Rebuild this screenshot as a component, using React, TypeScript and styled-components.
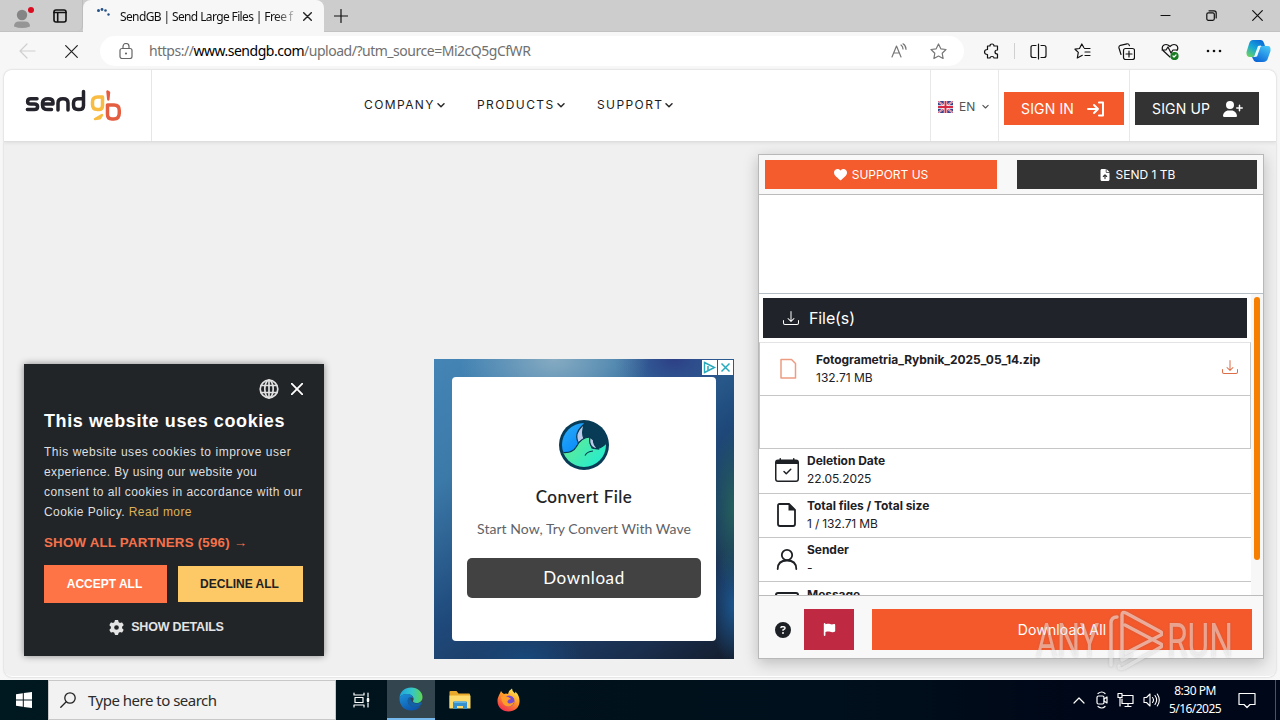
import React from 'react';
import styled, { createGlobalStyle } from 'styled-components';
import { FaCircleQuestion, FaFileArrowUp, FaFlag, FaHeart, FaUserPlus, FaGear } from 'react-icons/fa6';
import { BsCalendarCheck, BsDownload } from 'react-icons/bs';

const ui = '"Noto Sans", "Open Sans", sans-serif';
const inter = 'Inter, "Liberation Sans", sans-serif';

const Global = createGlobalStyle`
  * { box-sizing: border-box; }
  body { margin: 0; overflow: hidden; }
  svg { display: block; flex: none; }
  button { border: 0; padding: 0; margin: 0; font: inherit; }
`;

const Screen = styled.div`
  width: 1280px; height: 720px; overflow: hidden; position: relative;
  display: flex; flex-direction: column; background: #f7f7f7; font-family: ${ui};
`;
const Label = styled.span<{ $ls?: number }>`
  letter-spacing: ${p => p.$ls ?? 0}px; white-space: nowrap;
`;

/* Browser chrome */
const TabStrip = styled.div`
  height: 32px; flex: none; display: flex; background: #cdcdcd; border-bottom: 1px solid #c2c2c2;
`;
const StripLeft = styled.div`
  width: 83px; display: flex; align-items: center; padding: 1px 0 0 12px; gap: 19px;
  border-right: 1px solid #bdbdbd; border-radius: 0 0 5px 0;
`;
const Tab = styled.div`
  width: 241px; height: 32px; background: #f7f7f7; border-radius: 8px 8px 0 0;
  display: flex; align-items: center; padding: 0 11px 0 13px; font-size: 12px; color: #111;
`;
const TabTitle = styled.div`
  width: 176px; margin-left: 10px; margin-right: 7px; overflow: hidden; white-space: nowrap;
  mask-image: linear-gradient(90deg, #000 155px, transparent 180px);
`;
const NewTab = styled.div`flex: 1; padding: 9px 0 0 10px;`;
const WindowButtons = styled.div`
  display: flex; align-items: center; gap: 35px; padding-right: 17px;
`;
const Toolbar = styled.div`
  height: 38px; flex: none; display: flex; align-items: center; padding-left: 19px; background: #f7f7f7;
`;
const NavButtons = styled.div`display: flex; align-items: center; flex: none; width: 81px; gap: 28px;`;
const Address = styled.div`
  width: 864px; flex: none; height: 30px; background: #fff; border-radius: 15px; display: flex; align-items: center;
  padding: 0 17px 0 18px; font-size: 14px; color: #707070;
  b { font-weight: 400; color: #000; }
`;
const AddressText = styled.div`margin-left: 15px; flex: 1; white-space: nowrap; padding-bottom: 1px;`;
const ReadAloud = styled.div`margin-right: 23px;`;
const Tools = styled.div`display: flex; align-items: center; padding-left: 5px; flex: none;`;
const Tool = styled.div`width: 44px; flex: none; display: flex; justify-content: center;`;
const Rule = styled.i`width: 1px; height: 16px; background: #d0d0d0; margin: 0 1px;`;

/* Page */
const Page = styled.div`
  width: 1272px; height: 607px; margin-left: 4px; flex: none; background: #f0f0f0; overflow: hidden;
  border-radius: 8px; box-shadow: 0 0 2px #bbb; border-bottom: 1px solid #fff; display: flex; flex-direction: column;
`;
const SiteHeader = styled.header`
  height: 72px; flex: none; background: #fff; border-bottom: 1px solid #dedede; box-shadow: 0 1px 3px #ddd;
  display: flex; font-family: ${inter};
`;
const LogoCell = styled.div`width: 148px; border-right: 1px solid #e6e6e6; padding: 17px 0 0 21px;`;
const SiteNav = styled.nav`
  display: flex; padding: 0 0 2px 212px; flex: 1; align-items: center; font-size: 12px; font-weight: 400; color: #1c1c1c;
`;
const NavItem = styled.div<{ $w: number }>`width: ${p => p.$w}px; display: flex; align-items: center; gap: 2px;`;
const HeaderCell = styled.div<{ $w: number; $pad: string }>`
  width: ${p => p.$w}px; border-left: 1px solid #e8e8e8; padding: ${p => p.$pad}; display: flex; align-items: center;
  color: #555; font-size: 12px;
`;
const Language = styled.span`margin: 0 7px 0 6px; display: flex; color: #555;`;
const AuthButton = styled.button<{ $w: number; $dark?: boolean }>`
  width: ${p => p.$w}px; height: 33px; background: ${p => (p.$dark ? '#333' : '#f4592c')}; color: #fff;
  font-size: 14px; font-weight: 400; display: flex; align-items: center; gap: 13px; padding-left: 17px;
`;

const Content = styled.main`flex: 1; display: flex; align-items: flex-end; padding: 0 12px 17px 20px;`;

/* Cookie notice */
const Cookie = styled.section`
  width: 300px; height: 292px; margin: 0 110px 3px 0; background: #222528; padding: 15px 20px; color: #eee;
  box-shadow: 0 0 7px rgba(0,0,0,.45); font-family: "Liberation Sans", sans-serif; display: flex; flex-direction: column;
`;
const CookieTop = styled.div`display: flex; justify-content: flex-end; gap: 12px; align-items: center; height: 20px; padding-right: 1px;`;
const CookieTitle = styled.h2`margin: 11px 0 0; font-size: 18px; line-height: 22px; color: #fff; white-space: nowrap;`;
const CookieText = styled.p`
  margin: 10px 0 0; font-size: 12px; line-height: 20px; color: #dfdfdf;
  em { font-style: normal; color: #dcb157; }
`;
const Line = styled.span<{ $ls: number }>`display: block; white-space: nowrap; letter-spacing: ${p => p.$ls}px;`;
const Partners = styled.div`margin-top: 11px; font-size: 13.3px; line-height: 20px; font-weight: 700; color: #f4724b; white-space: nowrap;`;
const CookieButtons = styled.div`display: flex; align-items: center; gap: 11px; margin-top: 12px; height: 38px;`;
const CookieButton = styled.button<{ $accept?: boolean }>`
  width: ${p => (p.$accept ? 123 : 125)}px; height: ${p => (p.$accept ? 38 : 36)}px;
  background: ${p => (p.$accept ? '#ff7447' : '#fcc966')}; color: ${p => (p.$accept ? '#fff' : '#222')};
  font-size: 12px; font-weight: 700; padding-right: 2px;
`;
const Details = styled.div`
  display: flex; justify-content: center; align-items: center; gap: 7px; margin-top: 15px; height: 18px;
  font-size: 12.5px; font-weight: 700; color: #e4e4e4; padding-right: 15px;
`;

/* Advertisement */
const Ad = styled.section`
  width: 300px; height: 300px; margin-right: 24px; position: relative; padding: 18px;
  background:
    radial-gradient(ellipse 95px 60px at 40% 0, #86abc2, transparent),
    radial-gradient(ellipse 60px 40px at 80% 0, #2d3f86, transparent),
    radial-gradient(ellipse 25px 80px at 100% 50%, #24605c, transparent),
    radial-gradient(ellipse 25px 60px at 100% 82%, #1b568e, transparent),
    radial-gradient(ellipse 60px 30px at 30% 100%, #17477a, transparent),
    linear-gradient(145deg, #4485b6 0, #3b79a8 25%, #1f4a7c 52%, #1a2e4e 85%, #141d2c);
`;
const AdCard = styled.div`
  width: 264px; height: 264px; background: #fff; border-radius: 4px; display: flex; flex-direction: column; align-items: center;
  padding-top: 43px; font-family: Lato, sans-serif; color: #202124;
`;
const AdTitle = styled.div`margin-top: 15px; font-size: 17px; line-height: 24px; font-weight: 500; -webkit-text-stroke: .1px #202124;`;
const AdText = styled.div`margin-top: 10px; font-size: 14px; line-height: 20px; color: #5f6368;`;
const AdButton = styled.button`
  width: 234px; height: 40px; margin-top: 19px; padding-bottom: 2px; border-radius: 5px; background: #424242; color: #fff; font-size: 17px;
`;
const AdChoices = styled.div`position: absolute; top: 1px; right: 1px; display: flex; gap: 1px;`;

/* Download panel */
const Panel = styled.section`
  width: 506px; height: 505px; background: #fff; border: 1px solid #b8b8b8; font-family: ${inter}; color: #1d2024;
  box-shadow: 0 4px 14px rgba(0,0,0,.22); display: flex; flex-direction: column;
`;
const PanelTop = styled.div`
  height: 40px; flex: none; background: #f8f8f8; border-bottom: 1px solid #bbb; display: flex; padding: 5px 6px; gap: 20px;
`;
const TopButton = styled.button<{ $w: number; $dark?: boolean }>`
  width: ${p => p.$w}px; height: 29px; background: ${p => (p.$dark ? '#333' : '#f45b2d')}; color: #fff; font-size: 12px;
  display: flex; align-items: center; justify-content: center; gap: 5px;
`;
const Blank = styled.div`height: 99px; flex: none; border-bottom: 1px solid #b5bec4;`;
const Scroller = styled.div`height: 302px; flex: none; display: flex; border-bottom: 1px solid #bbb; overflow: hidden;`;
const List = styled.div`width: 492px; flex: none;`;
const Track = styled.div`width: 12px; background: #f7f7f7; padding: 3px 0 0 3px;`;
const Thumb = styled.div`width: 6px; height: 263px; border-radius: 3px; background: #f77f00;`;
const FilesTitle = styled.div`
  margin: 4px 4px 4px; height: 40px; background: #202329; color: #fff; font-size: 16px; display: flex; align-items: center;
  padding-left: 20px; gap: 10px;
`;
const FileRow = styled.div`
  height: 53px; border: solid #c6c6c6; border-width: 0 1px 1px; display: flex; align-items: center; padding: 0 12px 0 19px;
  &:nth-child(2) { height: 54px; border-top: 1px solid #e3e3e3; }
`;
const RowAction = styled.div`padding-bottom: 4px;`;
const Two = styled.div<{ $gap?: number }>`
  margin-left: ${p => p.$gap ?? 0}px; font-size: 12px; line-height: 18px; display: flex; flex-direction: column; flex: 1;
  b { font-weight: 700; letter-spacing: -.04px; }
`;
const InfoRow = styled.div<{ $h: number }>`
  height: ${p => p.$h}px; border-bottom: 1px solid #c6c6c6; padding: 3px 0 0 16px; display: flex; gap: 8px;
  > svg { margin-top: 6px; }
  &:last-child { padding-top: 4px; }
`;
const PanelFooter = styled.div`
  flex: 1; background: #f8f8f8; display: flex; align-items: center; padding: 4px 11px 0 16px;
  > svg { margin-top: 2px; }
`;
const FlagButton = styled.button`
  width: 50px; height: 41px; margin: 0 18px 0 13px; background: #c02942; color: #fff; display: flex; align-items: center; justify-content: center;
`;
const DownloadAll = styled.button`flex: 1; height: 41px; background: #f4592c; color: #fff; font-size: 14px;`;

const Watermark = styled.div`
  position: absolute; left: 1036px; top: 608px; width: 200px; height: 66px; display: flex; align-items: center; gap: 4px;
  color: rgba(255,255,255,.45); filter: drop-shadow(0 0 1px rgba(90,90,90,.5));
`;
const MarkWord = styled.div<{ $w: number; $scale: number }>`
  width: ${p => p.$w}px; font: 400 49px/66px Roboto, sans-serif; transform: scaleX(${p => p.$scale}); transform-origin: 0 50%; white-space: nowrap;
`;

/* Taskbar */
const Taskbar = styled.footer`
  height: 40px; margin-top: 3px; flex: none; background: linear-gradient(90deg, #001820, #00121c 40%, #00101c 65%, #000718 85%);
  display: flex; color: #fff;
`;
const TaskCell = styled.div<{ $w: number; $active?: boolean }>`
  width: ${p => p.$w}px; height: 40px; display: flex; align-items: center; justify-content: center;
  background: ${p => (p.$active ? '#33464f' : 'transparent')};
  border-bottom: ${p => (p.$active ? '2px solid #76b9ed' : '0')};
`;
const Search = styled.div`
  width: 288px; height: 40px; background: #f2f2f2; border: 1px solid #c8c8c8; color: #2b2b2b; font-size: 15px;
  display: flex; align-items: center; gap: 12px; padding-left: 11px;
`;
const Tray = styled.div`margin-left: auto; display: flex; align-items: center; gap: 9px;`;
const Clock = styled.div`
  width: 54px; margin-right: 7px; margin-left: -1px; font-size: 12px; line-height: 18px; display: flex; flex-direction: column; align-items: center;
`;
const ShowDesktop = styled.i`width: 5px; height: 40px; border-left: 1px solid #4b5360; margin-left: 10px;`;

type StrokeProps = { w?: number; h?: number; box?: string; color?: string; sw?: number; children: React.ReactNode };
const Stroke = ({ w = 20, h = w, box = `0 0 ${w} ${h}`, color = '#222', sw = 1.2, children }: StrokeProps) => (
  <svg width={w} height={h} viewBox={box} fill="none" stroke={color} strokeWidth={sw} strokeLinecap="round" strokeLinejoin="round">{children}</svg>
);
const Cross = ({ s = 10, c = '#222', sw = 1.2 }) => <Stroke w={s} color={c} sw={sw}><path d={`M.7.7 ${s - 0.7} ${s - 0.7}M${s - 0.7}.7.7 ${s - 0.7}`} /></Stroke>;
const Chevron = ({ s = 8, c = '#2b2b2b', sw = 1.5 }) => <Stroke w={s} box="0 0 8 8" color={c} sw={sw}><path d="m1 2.7 3 3 3-3" /></Stroke>;

const SendGbLogo = () => (
  <svg width="100" height="38" viewBox="0 0 100 38" fill="none" strokeWidth="3.5" strokeLinecap="round" strokeLinejoin="round">
    <g stroke="#25232b">
      <path d="M12 11.8H5.800q-3.200 0-3.200 2.600t3.200 2.600h3.500q3.300 0 3.300 2.800T9.300 22.600H2.400" />
      <path d="M17.500 17H28v-1.500q0-3.700-5-3.700t-5.500 4v2.500q0 4.300 5.500 4.300h3.500" />
      <path d="M33 23v-7q0-4.200 5-4.200t5 4.200v7" />
      <path d="M58.500 4.500v14q0 4.100-4.500 4.100h-1q-4.500 0-4.500-4.500v-2q0-4.300 4.500-4.300h5" />
    </g>
    <path d="M77.500 10H72.500q-5 0-5 5v2.500q0 5 5 5h1.500q3.500 0 3.500-4Z" stroke="#f8bc42" />
    <path d="m70 32 7-4-2 3.200Z" fill="#f8bc42" stroke="#f8bc42" strokeWidth="2.500" />
    <path d="m82.500 4.500 1.500 1-.7 7Z" fill="#e75a3d" stroke="#e75a3d" strokeWidth="2.500" />
    <path d="M82.500 18h6.500q5.300 0 5.300 5.500v2.200q0 6.300-5.500 6.300h-1.800q-4.500 0-4.500-4.500Z" stroke="#e45e42" />
  </svg>
);
const UkFlag = () => (
  <svg width="15" height="12" viewBox="0 0 15 12">
    <rect width="15" height="12" rx="1" fill="#36448d" />
    <path d="m0 0 15 12M15 0 0 12" stroke="#f2dce6" strokeWidth="1.800" /><path d="m0 0 15 12M15 0 0 12" stroke="#d83b50" strokeWidth=".8" />
    <path d="M7.500 0v12M0 6h15" stroke="#fff" strokeWidth="3.400" /><path d="M7.500 0v12M0 6h15" stroke="#d52842" strokeWidth="2" />
  </svg>
);
const WaveLogo = () => (
  <svg width="50" height="50" viewBox="0 0 50 50">
    <defs>
      <linearGradient id="blue" x2=".7" y2="1"><stop stopColor="#31b3f6" /><stop offset="1" stopColor="#0789fb" /></linearGradient>
      <linearGradient id="green" x2="1" y2=".6"><stop stopColor="#71e98a" /><stop offset="1" stopColor="#22edd0" /></linearGradient>
      <clipPath id="disc"><circle cx="25" cy="25" r="22" /></clipPath>
    </defs>
    <circle cx="25" cy="25" r="25" fill="#073b56" />
    <g clipPath="url(#disc)" stroke="#063950" strokeWidth="1.200">
      <path d="M0 34V0h24l1.500 4Q16 12 20 22q-3 9-10 11Z" fill="url(#blue)" />
      <path d="M25.500 4Q14 13 19.500 23l5.500-4.500q-3-6 .5-14.500Z" fill="#bccbea" />
      <path d="M0 32q13 2.500 17.500-5.500Q22 17.500 31 17q-.5 6 2 11 8 3 16-7v29H0Z" fill="url(#green)" />
      <path d="M31 17q-2 11 8 12-5-5-4.500-9Z" fill="#bccbea" />
      <path d="M26 35.500q2-4 8-4.500" fill="none" />
    </g>
  </svg>
);
const EdgeLogo = () => (
  <svg width="24" height="24" viewBox="0 0 24 24">
    <defs>
      <linearGradient id="edgeTop" x1="0" x2="1"><stop stopColor="#1da5df" /><stop offset=".55" stopColor="#35c6c9" /><stop offset="1" stopColor="#5fd64e" /></linearGradient>
      <linearGradient id="edgeLow" x1="0" y1="0" x2=".6" y2="1"><stop stopColor="#1c92d8" /><stop offset="1" stopColor="#0d55ad" /></linearGradient>
    </defs>
    <path d="M.5 11C1 4.500 6 .5 12 .5c7 0 11.500 5 11.500 9.500 0 4-3 6-6 6-2.500 0-4-1-3.400-2.200C16 11 13 7 8.500 7 4.500 7 1.500 8.500.5 11Z" fill="url(#edgeTop)" />
    <path d="M.5 11C1.500 8.500 4.500 7 8.500 7c3 0 5.300 1.800 5.700 4-4-1.500-6 1-5.200 4.500.8 3.800 5.500 6 12.500 3.500-2 3-5.500 4.500-9.500 4.500C5 23.500.2 18 .5 11Z" fill="url(#edgeLow)" />
    <path d="M9 15.500C8 12 9.500 10 12 10.200c-.8 1-.8 2 .4 3.600 2 3.200 6.400 3.500 9.400 1.200 1 0 1.200 1 .6 2-1 1.700-3.200 3-6.400 3-3.500 0-6-1.700-7-4.500Z" fill="#1260a8" />
  </svg>
);
const FolderLogo = () => (
  <svg width="22" height="20" viewBox="0 0 22 20">
    <path d="M.5 2q0-1 1-1h6l2 2.500H20q1 0 1 1V18H.5Z" fill="#e9a92b" />
    <path d="M.5 5.500H21.500V18.500H.5Z" fill="#fddb6d" />
    <path d="M4 19v-6.500q0-1 1-1h12q1 0 1 1V19h-4v-3H8v3Z" fill="#3791cd" /><path d="M5 11.500h12V13H5Z" fill="#62b5e4" />
  </svg>
);
const FirefoxLogo = () => (
  <svg width="23" height="24" viewBox="0 0 23 24">
    <defs>
      <linearGradient id="flame" x1=".8" y1="0" x2=".25" y2="1"><stop stopColor="#fff35a" /><stop offset=".45" stopColor="#ff9827" /><stop offset="1" stopColor="#ef2952" /></linearGradient>
    </defs>
    <path d="M4 3q1 2 3 3 2-1 4 0Q12 2 15 .5q0 3 3 5 .5-1 .3-2Q23 8 22.500 14c-.5 6-5 9.500-11 9.500C5 23.500.5 19 .5 13 .5 9 2 8 4 3Z" fill="url(#flame)" />
    <circle cx="12" cy="13" r="5.500" fill="#744bd0" />
    <path d="M4 9q3-2 7 0 2 1 3 2-2 0-3 1.500-1.500 2 1 3 3 .5 5-2-1 5-6 5-6-.5-7-9.500Z" fill="#ff9d2b" />
  </svg>
);
const Copilot = () => (
  <svg width="25" height="24" viewBox="0 0 25 24">
    <defs>
      <linearGradient id="pilotA" x1=".8" x2=".1" y2="1"><stop stopColor="#0b66d8" /><stop offset=".5" stopColor="#16a7d8" /><stop offset="1" stopColor="#6fd45c" /></linearGradient>
      <linearGradient id="pilotB" x1=".8" x2=".2" y2="1"><stop stopColor="#45c4f7" /><stop offset="1" stopColor="#0962d4" /></linearGradient>
    </defs>
    <path d="M7 1h8q2 0 3 3l1 3h-4q-2 0-3 3l-2 5q-1 3-3 3H4q-4 0-3.500-5L3 5Q4 1 7 1Z" fill="url(#pilotA)" />
    <path d="M18 7h4q3 0 2.500 5L22 19q-1 4-5 4H10q-2 0-3-3l-1-2h2q2 0 3-3l2-5q1-3 3-3Z" fill="url(#pilotB)" />
    <path d="m12 7 3-.5-4 11-3 .5Z" fill="#eefcff" />
  </svg>
);

const FileIcon = () => (
  <Stroke w={24} color="#1d2024" sw={1.800}><path d="M4.500 1H14l6 6v14q0 2-2 2H5q-2 0-2-2V2.500Q3 1 4.500 1Z" /><path d="M13.500 1v6.500H20Z" fill="#1d2024" stroke="none" /></Stroke>
);
const PersonIcon = () => (
  <Stroke w={24} color="#1d2024" sw={1.800}><circle cx="12" cy="8" r="5.200" /><path d="M2.700 22q0-8.500 9.300-8.500T21.300 22" /></Stroke>
);
const MessageIcon = () => (
  <Stroke w={24} color="#1d2024" sw={2}><rect x="1" y="1" width="22" height="17" rx="2" /></Stroke>
);

const Chrome = () => (
  <>
    <TabStrip>
      <StripLeft>
        <svg width="22" height="24" viewBox="0 0 22 24"><circle cx="10" cy="11" r="5.200" fill="#858585" /><path d="M2 22.500q0-5 5-5h6q5 0 5 5-8 3-16 0Z" fill="#969696" /><circle cx="19" cy="6" r="3" fill="#db0b20" /></svg>
        <Stroke w={14} color="#111" sw={1.600}><rect x="1" y="1" width="12" height="12" rx="2" /><path d="M1 3.500h12M4.700 4v8.500" /></Stroke>
      </StripLeft>
      <Tab>
        <svg width="14" height="16" viewBox="0 0 14 16" fill="#245288"><circle cx="2.500" cy="2.500" r="1.500" /><circle cx="6" cy="1.500" r="1.400" /><circle cx="9.500" cy="2.500" r="1.300" /><circle cx="12.500" cy="6.500" r="1.200" /></svg>
        <TabTitle><Label $ls={-0.62}>SendGB | Send Large Files | Free f</Label></TabTitle>
        <Cross s={9} sw={1.400} />
      </Tab>
      <NewTab><Stroke w={14} color="#111"><path d="M7 .5v13M.5 7h13" /></Stroke></NewTab>
      <WindowButtons>
        <Stroke w={11} color="#111"><path d="M1 5.500h9" /></Stroke>
        <Stroke w={11} color="#111"><rect x=".8" y="2.800" width="7.500" height="7.500" rx="1.500" /><path d="M3 .8h5q2.200 0 2.200 2.200v5" /></Stroke>
        <Cross s={11} c="#111" />
      </WindowButtons>
    </TabStrip>
    <Toolbar>
      <NavButtons>
        <Stroke w={18} h={16} color="#cfcfcf"><path d="M1 8h15M8 1 1 8l7 7" /></Stroke>
        <Cross s={13} />
      </NavButtons>
      <Address>
        <Stroke w={16} color="#666"><rect x="2" y="5.500" width="12" height="10" rx="2" /><path d="M5 5V3.500a3 3 0 0 1 6 0V5" /><circle cx="8" cy="10.500" r=".5" /></Stroke>
        <AddressText><Label $ls={-0.48}>https://<b>www.sendgb.com</b>/upload/?utm_source=Mi2cQ5gCfWR</Label></AddressText>
        <ReadAloud><Stroke w={16} color="#777"><path d="m1 14 4.500-11L10 14M2.600 10h5.800M10 2q2 1.500 2 4M12 .8q3 1.800 3 5.500" /></Stroke></ReadAloud>
        <Stroke w={17} color="#777"><path d="m8.500 1 2.300 4.800 5.200.7-3.800 3.700.9 5.300-4.600-2.500-4.600 2.500.9-5.300L1 6.500l5.200-.7Z" /></Stroke>
      </Address>
      <Tools>
        <Tool><Stroke w={17} color="#111"><path d="M4.500 3H7q0-2 2-2t2 2h3.500v4Q12 7 12 9t2.500 2v4H11q0-1.500-2-1.500T7 15H4.500v-3.500Q1.500 11.500 1.500 9t3-2.500Z" /></Stroke></Tool>
        <Rule />
        <Tool><Stroke w={17} color="#111"><path d="M6 2.500H3q-2 0-2 2v8q0 2 2 2h3M11 2.500h3q2 0 2 2v8q0 2-2 2h-3M8.500 1v15" /></Stroke></Tool>
        <Tool><Stroke w={17} color="#111"><path d="M10.500 5.500H16M11 9h5M11 12.500h5M9.800 4.500 7.800 1 5.500 5.500 1 6.200l3.300 3.200-1 5.600 5-2.700" /></Stroke></Tool>
        <Tool><Stroke w={17} color="#111"><rect x="5.500" y="5.500" width="11" height="11" rx="2" /><path d="M11 8v6M8 11h6M3 11.500 1 5q-.5-2 1.500-2.700L9 .8q1.800-.3 2.400 1.800" /></Stroke></Tool>
        <Tool><Stroke w={18} h={17} color="#111"><path d="M9 14 2 7.500Q0 4 3 2q3-1.500 6 1.500 3-3 6-1.500 3 2 1 5.500M1 7h4l2-3 3 6 2-3h4" /><circle cx="13.500" cy="13" r="3.500" fill="#167c20" stroke="#167c20" /><path d="m12 13 1 1 2-2" stroke="#fff" /></Stroke></Tool>
        <Tool><svg width="16" height="4" fill="#111"><circle cx="2" cy="2" r="1.300" /><circle cx="8" cy="2" r="1.300" /><circle cx="14" cy="2" r="1.300" /></svg></Tool>
        <Tool><Copilot /></Tool>
      </Tools>
    </Toolbar>
  </>
);

const CookieNotice = () => (
  <Cookie>
    <CookieTop>
      <Stroke w={20} color="#e0e0e0" sw={1.700}><circle cx="10" cy="10" r="8.800" /><ellipse cx="10" cy="10" rx="4.200" ry="8.800" /><path d="M10 1.200v17.600M2.200 6.500h15.600M2.200 13.500h15.600" /></Stroke>
      <Cross s={12} c="#fff" sw={1.800} />
    </CookieTop>
    <CookieTitle><Label $ls={0.6}>This website uses cookies</Label></CookieTitle>
    <CookieText>
      <Line $ls={0.53}>This website uses cookies to improve user</Line>
      <Line $ls={0.4}>experience. By using our website you</Line>
      <Line $ls={0.45}>consent to all cookies in accordance with our</Line>
      <Line $ls={0.42}>Cookie Policy. <em>Read more</em></Line>
    </CookieText>
    <Partners><Label $ls={0.22}>SHOW ALL PARTNERS (596) →</Label></Partners>
    <CookieButtons>
      <CookieButton $accept><Label>ACCEPT ALL</Label></CookieButton>
      <CookieButton><Label>DECLINE ALL</Label></CookieButton>
    </CookieButtons>
    <Details><FaGear size={15} /><Label $ls={-0.2}>SHOW DETAILS</Label></Details>
  </Cookie>
);

const Advert = () => (
  <Ad>
    <AdCard>
      <WaveLogo />
      <AdTitle><Label $ls={0.45}>Convert File</Label></AdTitle>
      <AdText><Label $ls={0.05}>Start Now, Try Convert With Wave</Label></AdText>
      <AdButton><Label $ls={0.6}>Download</Label></AdButton>
    </AdCard>
    <AdChoices>
      <svg width="15" height="15"><rect width="15" height="15" fill="#fff" /><path d="m2.500 2.500 10 5-10 5Z" fill="none" stroke="#26a9bd" strokeWidth="1.400" /><path d="M6 6v4" stroke="#26a9bd" strokeWidth="1.500" /></svg>
      <svg width="15" height="15"><rect width="15" height="15" fill="#fff" /><path d="m3.500 3.500 8 8m0-8-8 8" stroke="#26a9bd" strokeWidth="1.500" /></svg>
    </AdChoices>
  </Ad>
);

const DownloadPanel = () => (
  <Panel>
    <PanelTop>
      <TopButton $w={232}><FaHeart size={13} /><Label>SUPPORT US</Label></TopButton>
      <TopButton $w={240} $dark><FaFileArrowUp size={12} /><Label>SEND 1 TB</Label></TopButton>
    </PanelTop>
    <Blank />
    <Scroller>
      <List>
        <FilesTitle><BsDownload size={16} /><Label $ls={-0.1}>File(s)</Label></FilesTitle>
        <FileRow>
          <Stroke w={18} h={22} color="#ed9c82" sw={1.500}><path d="M2 1.500h10.500l4 4V20H2Z" /></Stroke>
          <Two $gap={19}><b>Fotogrametria_Rybnik_2025_05_14.zip</b><Label>132.71 MB</Label></Two>
          <RowAction><BsDownload size={16} color="#dc6d46" /></RowAction>
        </FileRow>
        <FileRow />
        <InfoRow $h={45}><BsCalendarCheck size={24} /><Two><b>Deletion Date</b><Label $ls={-0.1}>22.05.2025</Label></Two></InfoRow>
        <InfoRow $h={44}><FileIcon /><Two><b>Total files / Total size</b><Label $ls={-0.15}>1 / 132.71 MB</Label></Two></InfoRow>
        <InfoRow $h={44}><PersonIcon /><Two><b>Sender</b><span>-</span></Two></InfoRow>
        <InfoRow $h={44}><MessageIcon /><Two><b>Message</b></Two></InfoRow>
      </List>
      <Track><Thumb /></Track>
    </Scroller>
    <PanelFooter>
      <FaCircleQuestion size={16} color="#1d2024" />
      <FlagButton><FaFlag size={13} /></FlagButton>
      <DownloadAll><Label $ls={0.15}>Download All</Label></DownloadAll>
    </PanelFooter>
  </Panel>
);

export default function App() {
  return (
    <Screen>
      <Global />
      <Chrome />
      <Page>
        <SiteHeader>
          <LogoCell><SendGbLogo /></LogoCell>
          <SiteNav>
            <NavItem $w={113}><Label $ls={1.4}>COMPANY</Label><Chevron /></NavItem>
            <NavItem $w={120}><Label $ls={1.4}>PRODUCTS</Label><Chevron /></NavItem>
            <NavItem $w={80}><Label $ls={1.4}>SUPPORT</Label><Chevron /></NavItem>
          </SiteNav>
          <HeaderCell $w={68} $pad="2px 0 0 7px"><UkFlag /><Language><Label>EN</Label></Language><Chevron s={7} sw={1.3} c="#555" /></HeaderCell>
          <HeaderCell $w={131} $pad="6px 0 0 5px">
            <AuthButton $w={120}><Label $ls={0.15}>SIGN IN</Label><Stroke w={18} h={16} color="#fff" sw={2}><path d="M1 8h10M7 4l4 4-4 4M12 1.500h4v13h-4" /></Stroke></AuthButton>
          </HeaderCell>
          <HeaderCell $w={147} $pad="6px 0 0 5px">
            <AuthButton $w={124} $dark><Label $ls={0.15}>SIGN UP</Label><FaUserPlus size={20} /></AuthButton>
          </HeaderCell>
        </SiteHeader>
        <Content>
          <CookieNotice />
          <Advert />
          <DownloadPanel />
        </Content>
      </Page>
      <Taskbar>
        <TaskCell $w={48}><svg width="16" height="16" fill="#fff"><path d="M0 2.200 6.800 1.200V7.500H0ZM7.800 1 16 0V7.500H7.800ZM0 8.500H6.800V14.800L0 13.800ZM7.800 8.500H16V16L7.800 15Z" /></svg></TaskCell>
        <Search><Stroke w={16} color="#222" sw={1.300}><circle cx="10" cy="6" r="5.200" /><path d="m6 10-5.200 5.200" /></Stroke><Label $ls={-0.5}>Type here to search</Label></Search>
        <TaskCell $w={51}><Stroke w={18} h={16} color="#fff"><path d="M1 1v2h10V1M1 15v-2h10v2M2 5.500h8v5H2ZM15 1v4M15 11v4" /><path d="M15 7v2" strokeWidth="2.500" /></Stroke></TaskCell>
        <TaskCell $w={48} $active><EdgeLogo /></TaskCell>
        <TaskCell $w={49}><FolderLogo /></TaskCell>
        <TaskCell $w={49}><FirefoxLogo /></TaskCell>
        <Tray>
          <Stroke w={12} h={8} color="#fff"><path d="m1 7 5-5 5 5" /></Stroke>
          <Stroke w={14} h={18} color="#fff"><rect x="3" y="5" width="7" height="8" rx="1.500" /><path d="m10 8 3-2v6l-3-2M4 2.500q4-3 7 0M4 15.500q4 3 7 0" /></Stroke>
          <Stroke w={17} h={16} color="#fff"><path d="M6 3.500h10v8H5V7M8 14.500h6M11 12v2.500M1 1.500h4v4H1ZM3 6v8" /></Stroke>
          <Stroke w={17} h={16} color="#fff" sw={1.100}><path d="M1 5.500h2.500L7 2v12l-3.500-3.500H1ZM9.500 5.500q2 2.500 0 5M12 3.500q3.300 4.500 0 9M14.300 2q4 6 0 12" /></Stroke>
          <Clock><Label $ls={-0.5}>8:30 PM</Label><Label $ls={-0.55}>5/16/2025</Label></Clock>
          <Stroke w={18} h={17} color="#fff"><path d="M1 1.500h16v11h-5l-3 3-3-3H1Z" /></Stroke>
          <ShowDesktop />
        </Tray>
      </Taskbar>
      <Watermark>
        <MarkWord $w={62} $scale={0.66}>ANY</MarkWord>
        <Stroke w={61} h={66} color="rgba(255,255,255,.5)" sw={3.4}><path d="M15 9Q9 9 9 15v42M24 45 59 27q2-1 0-3L24 5q-4-2-4 2v45l9-5M23 17l36 19q2 1 0 3L22 60q-5 2-5-2" /></Stroke>
        <MarkWord $w={62} $scale={0.68}>RUN</MarkWord>
      </Watermark>
    </Screen>
  );
}
